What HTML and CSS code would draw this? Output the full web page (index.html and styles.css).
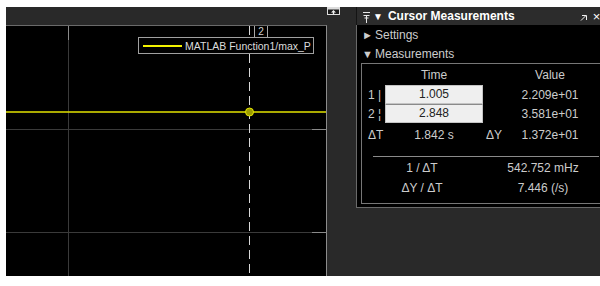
FILE: index.html
```html
<!DOCTYPE html>
<html lang="en">
<head>
    <meta charset="UTF-8">
    <title>Scope - Cursor Measurements</title>
    <link rel="stylesheet" href="styles.css">
</head>
<body>

    <div class="app">

        <!-- Scope display -->
        <div class="scope">
            <div class="scope-bar">
                <svg class="undock" width="13" height="8" viewBox="0 0 13 8">
                    <rect x="0.5" y="0.5" width="12" height="7" fill="#1a1a1a" stroke="#dcdcdc"/>
                    <rect x="0.5" y="0.5" width="12" height="2" fill="#dcdcdc"/>
                    <path d="M6.5 3 L4 5.5 H5.8 V7.5 H7.2 V5.5 H9 Z" fill="#f0f0f0"/>
                </svg>
            </div>
            <div class="plot">
                <svg class="plot-lines" width="320" height="250" viewBox="0 0 320 250">
                    <line x1="62.5" y1="0" x2="62.5" y2="250" stroke="#3a3a3a"/>
                    <line x1="62.5" y1="0" x2="62.5" y2="14" stroke="#8a8a8a"/>
                    <line x1="0" y1="103.5" x2="320" y2="103.5" stroke="#3a3a3a"/>
                    <line x1="0" y1="206.5" x2="320" y2="206.5" stroke="#3a3a3a"/>
                    <line x1="306" y1="103.5" x2="320" y2="103.5" stroke="#8a8a8a"/>
                    <line x1="306" y1="206.5" x2="320" y2="206.5" stroke="#8a8a8a"/>
                    <line x1="0" y1="86" x2="320" y2="86" stroke="#e3e300" stroke-width="1.5"/>
                    <line x1="243.5" y1="0" x2="243.5" y2="250" stroke="#d8d8d8" stroke-dasharray="9 5"/>
                    <circle cx="243.5" cy="86" r="4" fill="#9c9c00" stroke="#e3e300" stroke-width="1"/>
                </svg>
                <div class="cursor-tag">2</div>
                <div class="legend">
                    <span class="legend-line"></span>MATLAB Function1/max_P
                </div>
            </div>
        </div>

        <!-- Cursor Measurements panel -->
        <div class="panel">
            <div class="panel-head">
                <svg class="pin" width="7" height="11" viewBox="0 0 7 11">
                    <path d="M0 0.5 H7 M0.5 3.5 H6.5 M3.5 3 V11 M1.5 6 H5.5" stroke="#e8e8e8" fill="none"/>
                </svg>
                <span class="caret">&#9660;</span>
                <span class="panel-title">Cursor Measurements</span>
                <svg class="head-icon" width="7" height="6" viewBox="0 0 7 6">
                    <path d="M1 5.5 L5.5 1 M2 0.5 H6.5 V5" stroke="#f0f0f0" fill="none"/>
                </svg>
                <span class="close">&#215;</span>
            </div>
            <div class="panel-body">
                <div class="section"><span class="arrow">&#9658;</span>Settings</div>
                <div class="section open"><span class="arrow">&#9660;</span>Measurements</div>

                <div class="group">
                    <div class="meas-grid">
                        <span></span>
                        <span class="center">Time</span>
                        <span></span>
                        <span class="center">Value</span>

                        <span class="label">1 |</span>
                        <span class="time-box">1.005</span>
                        <span></span>
                        <span class="center">2.209e+01</span>

                        <span class="label">2 &#166;</span>
                        <span class="time-box second">2.848</span>
                        <span></span>
                        <span class="center">3.581e+01</span>

                        <span class="label">&#916;T</span>
                        <span class="center">1.842 s</span>
                        <span class="center">&#916;Y</span>
                        <span class="center">1.372e+01</span>
                    </div>

                    <div class="stats">
                        <span>1 / &#916;T</span>
                        <span>542.752 mHz</span>
                        <span>&#916;Y / &#916;T</span>
                        <span>7.446 (/s)</span>
                    </div>
                </div>
            </div>
        </div>

    </div>

</body>
</html>
```

FILE: styles.css
```css
body {
    margin: 0;
    background-color: #ffffff;
    font-family: "Liberation Sans", Arial, sans-serif;
    overflow: hidden;
}

/* Whole window area */
.app {
    display: flex;
    margin: 7px 0 0 6px;
    width: 600px;
    height: 269px;
    background-color: #292929;
}

/* Scope display on the left */
.scope {
    display: flex;
    flex-direction: column;
    width: 350px;
    flex: none;
}

.scope-bar {
    display: flex;
    justify-content: flex-end;
    align-items: flex-start;
    height: 18px;
    padding-right: 16px;
}

.plot {
    position: relative;
    width: 320px;
    height: 250px;
    background-color: #000000;
    border-top: 1px solid #6a6a6a;
    border-right: 1px solid #8c8c8c;
}

.plot-lines {
    display: block;
}

.cursor-tag {
    position: absolute;
    left: 248px;
    top: 0;
    width: 12px;
    height: 11px;
    border: 1px solid #a8a8a8;
    border-top: none;
    color: #d0d0d0;
    font-size: 10px;
    line-height: 12px;
    text-align: center;
    background-color: #000000;
}

.legend {
    position: absolute;
    left: 132px;
    top: 11px;
    display: flex;
    align-items: center;
    width: 174px;
    height: 15px;
    border: 1px solid #a0a0a0;
    background-color: #000000;
    color: #dcdcdc;
    font-size: 10.5px;
}

.legend-line {
    flex: none;
    width: 39px;
    height: 2px;
    margin: 0 3px 0 4px;
    background-color: #f2f200;
}

/* Cursor Measurements panel */
.panel {
    flex: 1;
    display: flex;
    flex-direction: column;
    overflow: hidden;
}

.panel-head {
    display: flex;
    align-items: center;
    height: 18px;
    border-left: 1px solid #141414;
    background-color: #2c2c2c;
    color: #ffffff;
    white-space: nowrap;
}

.pin {
    margin: 2px 0 0 6px;
}

.caret {
    margin-left: 3px;
    font-size: 10px;
}

.panel-title {
    margin-left: 5px;
    font-size: 12px;
    font-weight: bold;
}

.head-icon {
    margin-left: 65px;
    margin-top: 4px;
}

.close {
    margin-left: 6px;
    font-size: 13px;
}

.panel-body {
    height: 182px;
    background-color: #000000;
    border-left: 1px solid #6a6a6a;
    border-bottom: 1px solid #6a6a6a;
    color: #cccccc;
    font-size: 12px;
}

.section {
    height: 20px;
    line-height: 21px;
    padding-left: 5px;
}

.section.open {
    height: 18px;
    line-height: 18px;
}

.arrow {
    display: inline-block;
    width: 13px;
    font-size: 11px;
}

.group {
    margin: 0 3px 0 4px;
    height: 139px;
    border: 1px solid #777777;
}

.meas-grid {
    display: grid;
    grid-template-columns: 23px 98px 22px 90px;
    grid-template-rows: 21px 19px 19px 24px;
    align-items: center;
}

.center {
    text-align: center;
}

.label {
    padding-left: 6px;
}

.time-box {
    align-self: stretch;
    background-color: #efefef;
    border: 1px solid #c4c4c4;
    color: #222222;
    line-height: 17px;
    text-align: center;
}

.time-box.second {
    border-top-color: #8a8a8a;
}

.stats {
    display: grid;
    grid-template-columns: 98px 100px;
    grid-template-rows: 21px 20px;
    column-gap: 22px;
    align-items: center;
    margin: 9px 3px 0 11px;
    border-top: 1px solid #8a8a8a;
    text-align: center;
}
```
